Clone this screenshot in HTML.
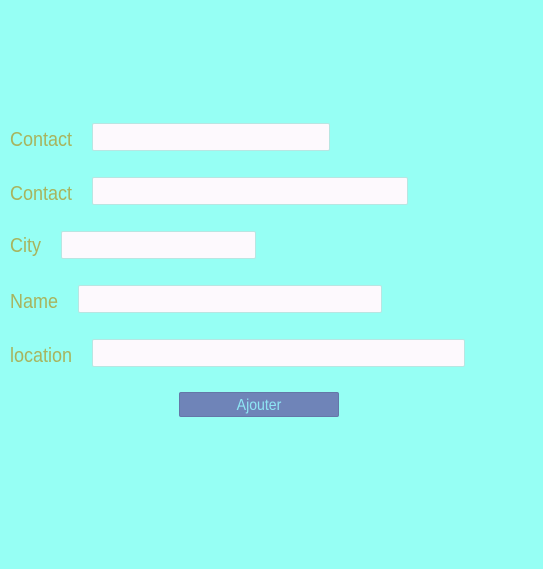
<!DOCTYPE html>
<html><head><style>
body{margin:0;width:543px;height:569px;background:#96fff4;position:relative;font-family:"Liberation Sans",sans-serif;overflow:hidden}
.l{position:absolute;left:10px;font-size:20px;color:#a8b45e;line-height:24px;transform:scaleX(0.9);transform-origin:left}
.i{position:absolute;height:26px;background:#fdf9fd;border:1px solid #b8e6e2;border-radius:2px}
.b{position:absolute;left:179px;top:392px;width:158px;height:23px;background:#6f84b8;border:1px solid #6577a8;border-radius:2px}
.b span{position:absolute;left:0;right:0;top:1px;color:#8ee6f4;font-size:16px;text-align:center;line-height:24px;transform:scaleX(0.88)}
</style></head><body>
<div class="l" style="top:128px">Contact</div><div class="i" style="left:92px;top:123px;width:236px"></div>
<div class="l" style="top:182px">Contact</div><div class="i" style="left:92px;top:177px;width:314px"></div>
<div class="l" style="top:234px">City</div><div class="i" style="left:61px;top:231px;width:193px"></div>
<div class="l" style="top:290px">Name</div><div class="i" style="left:78px;top:285px;width:302px"></div>
<div class="l" style="top:344px">location</div><div class="i" style="left:92px;top:339px;width:371px"></div>
<div class="b"><span>Ajouter</span></div>
</body></html>
